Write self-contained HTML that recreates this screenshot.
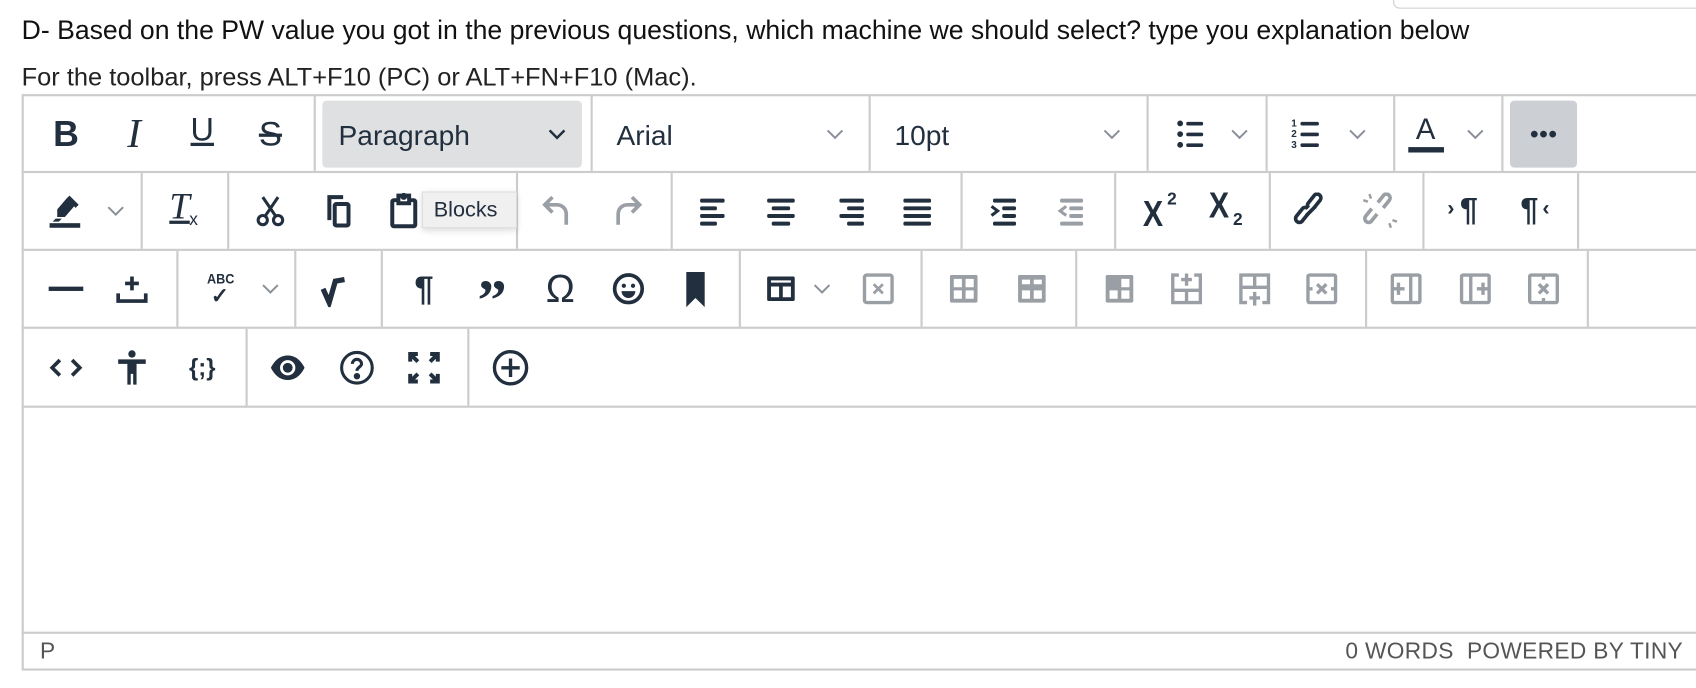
<!DOCTYPE html>
<html><head><meta charset="utf-8"><style>
html,body{margin:0;padding:0;background:#fff;overflow:hidden}
#w{position:absolute;left:0;top:0;width:1568px;height:636px;transform:scale(1.08163);transform-origin:0 0;font-family:"Liberation Sans",sans-serif;color:#222f3e}
.t{position:absolute;white-space:nowrap;color:#111}
.ln{position:absolute;background:#ccc}
.i{position:absolute;width:34px;height:34px;margin:-17px 0 0 -17px}
.i svg{width:34px;height:34px;display:block}
.ch{position:absolute;width:16px;height:16px;margin:-8px 0 0 -8px}
.tx{position:absolute;font-size:25px;color:#222f3e;transform:translate(-50%,-50%)}
</style></head><body><div id="w">
<div style="position:absolute;left:1288px;top:-10px;width:300px;height:18px;border:1.5px solid #ccc;border-radius:6px;box-sizing:border-box"></div>
<div class="t" style="left:20px;top:15px;font-size:24.6px">D- Based on the PW value you got in the previous questions, which machine we should select? type you explanation below</div>
<div class="t" style="left:20px;top:58px;font-size:23.5px;color:#222">For the toolbar, press ALT+F10 (PC) or ALT+FN+F10 (Mac).</div>

<div style="position:absolute;left:20px;top:87px;width:1560px;height:533px;border:2px solid #ccc;box-sizing:border-box"></div>
<div class="ln" style="left:20px;top:158px;width:1560px;height:2px"></div>
<div class="ln" style="left:20px;top:230px;width:1560px;height:2px"></div>
<div class="ln" style="left:20px;top:302px;width:1560px;height:2px"></div>
<div class="ln" style="left:20px;top:375px;width:1560px;height:2px"></div>
<div class="ln" style="left:20px;top:584px;width:1560px;height:2px"></div>
<div class="ln" style="left:290px;top:88px;width:1.5px;height:70px"></div>
<div class="ln" style="left:546px;top:88px;width:1.5px;height:70px"></div>
<div class="ln" style="left:803px;top:88px;width:1.5px;height:70px"></div>
<div class="ln" style="left:1060px;top:88px;width:1.5px;height:70px"></div>
<div class="ln" style="left:1170px;top:88px;width:1.5px;height:70px"></div>
<div class="ln" style="left:1288px;top:88px;width:1.5px;height:70px"></div>
<div class="ln" style="left:1388px;top:88px;width:1.5px;height:70px"></div>
<div class="ln" style="left:130px;top:160px;width:1.5px;height:70px"></div>
<div class="ln" style="left:210px;top:160px;width:1.5px;height:70px"></div>
<div class="ln" style="left:477px;top:160px;width:1.5px;height:70px"></div>
<div class="ln" style="left:620px;top:160px;width:1.5px;height:70px"></div>
<div class="ln" style="left:888px;top:160px;width:1.5px;height:70px"></div>
<div class="ln" style="left:1030px;top:160px;width:1.5px;height:70px"></div>
<div class="ln" style="left:1173px;top:160px;width:1.5px;height:70px"></div>
<div class="ln" style="left:1315px;top:160px;width:1.5px;height:70px"></div>
<div class="ln" style="left:1458px;top:160px;width:1.5px;height:70px"></div>
<div class="ln" style="left:163px;top:232px;width:1.5px;height:70px"></div>
<div class="ln" style="left:272px;top:232px;width:1.5px;height:70px"></div>
<div class="ln" style="left:352px;top:232px;width:1.5px;height:70px"></div>
<div class="ln" style="left:683px;top:232px;width:1.5px;height:70px"></div>
<div class="ln" style="left:851px;top:232px;width:1.5px;height:70px"></div>
<div class="ln" style="left:994px;top:232px;width:1.5px;height:70px"></div>
<div class="ln" style="left:1262px;top:232px;width:1.5px;height:70px"></div>
<div class="ln" style="left:1467px;top:232px;width:1.5px;height:70px"></div>
<div class="ln" style="left:227px;top:304px;width:1.5px;height:71px"></div>
<div class="ln" style="left:432px;top:304px;width:1.5px;height:71px"></div>

<!-- row1 -->
<div class="tx" style="left:61px;top:124px;font-weight:bold;font-size:33px">B</div>
<div class="tx" style="left:124px;top:124px;font-style:italic;font-family:'Liberation Serif';font-size:38px">I</div>
<div class="tx" style="left:187px;top:121px;text-decoration:underline;font-size:30px">U</div>
<div class="tx" style="left:250px;top:124px;text-decoration:line-through;font-size:32px">S</div>
<div style="position:absolute;left:298px;top:93px;width:240px;height:62px;background:#dee0e2;border-radius:4px"></div>
<div class="t" style="left:313px;top:110px;font-size:26px;color:#222f3e">Paragraph</div>
<div class="t" style="left:570px;top:110px;font-size:26px;color:#222f3e">Arial</div>
<div class="t" style="left:827px;top:110px;font-size:26px;color:#222f3e">10pt</div>
<svg class="ch" style="left:515px;top:124px" viewBox="0 0 14 14"><path d="M1 4l6 6 6-6" fill="none" stroke="#222f3e" stroke-width="2"/></svg>
<svg class="ch" style="left:772px;top:124px" viewBox="0 0 14 14"><path d="M1 4l6 6 6-6" fill="none" stroke="#8a9099" stroke-width="1.6"/></svg>
<svg class="ch" style="left:1028px;top:124px" viewBox="0 0 14 14"><path d="M1 4l6 6 6-6" fill="none" stroke="#8a9099" stroke-width="1.6"/></svg>
<svg class="ch" style="left:1146px;top:124px" viewBox="0 0 14 14"><path d="M1 4l6 6 6-6" fill="none" stroke="#8a9099" stroke-width="1.6"/></svg>
<svg class="ch" style="left:1255px;top:124px" viewBox="0 0 14 14"><path d="M1 4l6 6 6-6" fill="none" stroke="#8a9099" stroke-width="1.6"/></svg>
<svg class="ch" style="left:1364px;top:124px" viewBox="0 0 14 14"><path d="M1 4l6 6 6-6" fill="none" stroke="#8a9099" stroke-width="1.6"/></svg>
<div class="i" style="left:1101px;top:124px"><svg viewBox="0 0 24 24" fill="#222f3e"><circle cx="5" cy="5" r="1.9"/><circle cx="5" cy="12" r="1.9"/><circle cx="5" cy="19" r="1.9"/><rect x="9" y="4" width="11" height="2.4" rx="1"/><rect x="9" y="11" width="11" height="2.4" rx="1"/><rect x="9" y="18" width="11" height="2.4" rx="1"/></svg></div>
<div class="i" style="left:1208px;top:124px"><svg viewBox="0 0 24 24" fill="#222f3e"><text x="2" y="7" font-size="6.5" font-weight="bold" font-family="Liberation Sans">1</text><text x="2" y="14" font-size="6.5" font-weight="bold" font-family="Liberation Sans">2</text><text x="2" y="21" font-size="6.5" font-weight="bold" font-family="Liberation Sans">3</text><rect x="8" y="4" width="12" height="2.4" rx="1"/><rect x="8" y="11" width="12" height="2.4" rx="1"/><rect x="8" y="18" width="12" height="2.4" rx="1"/></svg></div>
<div class="tx" style="left:1318px;top:120px;font-size:27px">A</div>
<div style="position:absolute;left:1302px;top:136px;width:33px;height:5px;background:#222f3e"></div>
<div style="position:absolute;left:1396px;top:93px;width:62px;height:62px;background:#cccfd3;border-radius:4px"></div>
<div class="i" style="left:1427px;top:124px"><svg viewBox="0 0 24 24" fill="#222f3e"><circle cx="6" cy="12" r="2.2"/><circle cx="12" cy="12" r="2.2"/><circle cx="18" cy="12" r="2.2"/></svg></div>

<!-- row2 -->
<div class="i" style="left:60px;top:195px"><svg viewBox="0 0 24 24" fill="#222f3e"><path d="M13 4l5 5-6 7-5 0 0-5z M15 2l6 6-2 2-6-6z M6 17h4l-2 2H4z"/><rect x="2" y="20" width="20" height="3"/></svg></div>
<svg class="ch" style="left:107px;top:195px" viewBox="0 0 14 14"><path d="M1 4l6 6 6-6" fill="none" stroke="#8a9099" stroke-width="1.6"/></svg>
<div class="tx" style="left:166px;top:192px;font-style:italic;font-family:'Liberation Serif';font-size:34px;text-decoration:underline">T</div>
<div class="t" style="left:175px;top:195px;font-size:16px;color:#222f3e">x</div>
<div class="i" style="left:250px;top:195px"><svg viewBox="0 0 24 24" fill="none" stroke="#222f3e" stroke-width="2"><circle cx="7" cy="18" r="3"/><circle cx="17" cy="18" r="3"/><path d="M8.5 15.5L17 3M15.5 15.5L7 3"/></svg></div>
<div class="i" style="left:313px;top:195px"><svg viewBox="0 0 24 24" fill="none" stroke="#222f3e" stroke-width="2.6"><path d="M6 18V3h9"/><rect x="9.5" y="7.5" width="9" height="14" rx="1"/></svg></div>
<div class="i" style="left:374px;top:195px"><svg viewBox="0 0 24 24" fill="none" stroke="#222f3e" stroke-width="2.6"><rect x="4" y="5" width="15" height="17" rx="1"/><rect x="8" y="2" width="7" height="5" fill="#fff"/><circle cx="11.5" cy="2.5" r="1"/></svg></div>
<div style="position:absolute;left:390px;top:177px;width:88px;height:34px;background:#f0f0f0;border:1px solid #ddd;box-shadow:0 2px 6px rgba(0,0,0,.15);box-sizing:border-box"></div>
<div class="t" style="left:401px;top:183px;font-size:20px;color:#222f3e">Blocks</div>
<div class="i" style="left:515px;top:195px"><svg viewBox="0 0 24 24" fill="none" stroke="#9a9fa5" stroke-width="2.4"><path d="M9 3L4 8l5 5"/><path d="M4 8h8a6 6 0 016 6v7"/></svg></div>
<div class="i" style="left:580px;top:195px"><svg viewBox="0 0 24 24" fill="none" stroke="#9a9fa5" stroke-width="2.4"><path d="M15 3l5 5-5 5"/><path d="M20 8h-8a6 6 0 00-6 6v7"/></svg></div>
<div class="i" style="left:660px;top:195px"><svg viewBox="0 0 24 24" fill="#222f3e"><rect x="3" y="4" width="16" height="2.6" rx="1"/><rect x="3" y="9" width="11" height="2.6" rx="1"/><rect x="3" y="14" width="16" height="2.6" rx="1"/><rect x="3" y="19" width="11" height="2.6" rx="1"/></svg></div>
<div class="i" style="left:722px;top:195px"><svg viewBox="0 0 24 24" fill="#222f3e"><rect x="3" y="4" width="18" height="2.6" rx="1"/><rect x="6" y="9" width="12" height="2.6" rx="1"/><rect x="3" y="14" width="18" height="2.6" rx="1"/><rect x="6" y="19" width="12" height="2.6" rx="1"/></svg></div>
<div class="i" style="left:786px;top:195px"><svg viewBox="0 0 24 24" fill="#222f3e"><rect x="5" y="4" width="16" height="2.6" rx="1"/><rect x="10" y="9" width="11" height="2.6" rx="1"/><rect x="5" y="14" width="16" height="2.6" rx="1"/><rect x="10" y="19" width="11" height="2.6" rx="1"/></svg></div>
<div class="i" style="left:848px;top:195px"><svg viewBox="0 0 24 24" fill="#222f3e"><rect x="3" y="4" width="18" height="2.6" rx="1"/><rect x="3" y="9" width="18" height="2.6" rx="1"/><rect x="3" y="14" width="18" height="2.6" rx="1"/><rect x="3" y="19" width="18" height="2.6" rx="1"/></svg></div>
<div class="i" style="left:928px;top:195px"><svg viewBox="0 0 24 24" fill="#222f3e"><rect x="5" y="4" width="15" height="2.6" rx="1"/><rect x="11" y="9" width="9" height="2.6" rx="1"/><rect x="11" y="14" width="9" height="2.6" rx="1"/><rect x="5" y="19" width="15" height="2.6" rx="1"/><path d="M4 9l4 3-4 3" fill="none" stroke="#222f3e" stroke-width="2"/></svg></div>
<div class="i" style="left:990px;top:195px"><svg viewBox="0 0 24 24" fill="#9a9fa5"><rect x="5" y="4" width="15" height="2.6" rx="1"/><rect x="11" y="9" width="9" height="2.6" rx="1"/><rect x="11" y="14" width="9" height="2.6" rx="1"/><rect x="5" y="19" width="15" height="2.6" rx="1"/><path d="M9 9l-4 3 4 3" fill="none" stroke="#9a9fa5" stroke-width="2"/></svg></div>
<div class="tx" style="left:1066px;top:198px;font-size:33px;font-weight:bold;transform:translate(-50%,-50%) scaleX(.85)">X</div><div class="t" style="left:1079px;top:176px;font-size:16px;font-weight:bold;color:#222f3e">2</div>
<div class="tx" style="left:1127px;top:190px;font-size:33px;font-weight:bold;transform:translate(-50%,-50%) scaleX(.85)">X</div><div class="t" style="left:1140px;top:195px;font-size:16px;font-weight:bold;color:#222f3e">2</div>
<div class="i" style="left:1212px;top:195px"><svg viewBox="0 0 24 24" fill="none" stroke="#222f3e" stroke-width="2.4"><path d="M10 14l-4 5a2.5 2.5 0 01-3.5-3.5l4-5a2.5 2.5 0 013.5 0"/><path d="M14 10l4-5a2.5 2.5 0 00-3.5-3.5l-4 5a2.5 2.5 0 000 3.5"/><path d="M9 15l6-6"/></svg></div>
<div class="i" style="left:1276px;top:195px"><svg viewBox="0 0 24 24" fill="none" stroke="#9a9fa5" stroke-width="2.4"><path d="M10 14l-4 5a2.5 2.5 0 01-3.5-3.5l4-5"/><path d="M14 10l4-5a2.5 2.5 0 00-3.5-3.5l-4 5"/><path d="M5 1l1 3M1 5l3 1M19 23l-1-3M23 19l-3-1" stroke-width="1.6"/></svg></div>
<div class="tx" style="left:1358px;top:195px;font-size:30px;font-weight:bold">¶</div><div class="t" style="left:1338px;top:182px;font-size:20px;font-weight:bold;color:#222f3e">›</div>
<div class="tx" style="left:1414px;top:195px;font-size:30px;font-weight:bold">¶</div><div class="t" style="left:1426px;top:182px;font-size:20px;font-weight:bold;color:#222f3e">‹</div>

<!-- row3 -->
<div style="position:absolute;left:45px;top:265px;width:32px;height:4px;background:#222f3e"></div>
<div class="i" style="left:122px;top:267px"><svg viewBox="0 0 24 24" fill="none" stroke="#222f3e" stroke-width="2.4"><path d="M12 4v9M7.5 8.5h9"/><path d="M3 15v5h18v-5"/></svg></div>
<div class="t" style="left:190px;top:250px;font-size:13px;font-weight:bold;color:#222f3e;transform:scaleX(.9)">ABC</div>
<div class="t" style="left:195px;top:261px;font-size:20px;font-weight:bold;color:#222f3e">✓</div>
<svg class="ch" style="left:250px;top:267px" viewBox="0 0 14 14"><path d="M1 4l6 6 6-6" fill="none" stroke="#8a9099" stroke-width="1.6"/></svg>
<div class="i" style="left:310px;top:267px"><svg viewBox="0 0 24 24" fill="none" stroke="#222f3e" stroke-width="3.4"><path d="M4 12l4 9 4-14 6-1"/></svg></div>
<div class="tx" style="left:392px;top:267px;font-size:32px;font-weight:bold">¶</div>
<div class="tx" style="left:455px;top:278px;font-size:54px;font-weight:bold;font-family:'Liberation Serif'">”</div>
<div class="tx" style="left:518px;top:267px;font-size:36px">Ω</div>
<div class="i" style="left:581px;top:267px"><svg viewBox="0 0 24 24" fill="none" stroke="#222f3e" stroke-width="2.4"><circle cx="12" cy="12" r="9"/><circle cx="9" cy="10" r="1.4" fill="#222f3e" stroke="none"/><circle cx="15" cy="10" r="1.4" fill="#222f3e" stroke="none"/><path d="M7.5 13.5h9a4.5 4.5 0 01-9 0z" fill="#222f3e" stroke="none"/></svg></div>
<div class="i" style="left:643px;top:267px"><svg viewBox="0 0 24 24" fill="#222f3e"><path d="M6 1h12v23l-6-6-6 6z"/></svg></div>
<div class="i" style="left:722px;top:267px"><svg viewBox="0 0 24 24" fill="#222f3e"><path d="M4 4h16a1 1 0 011 1v14a1 1 0 01-1 1H4a1 1 0 01-1-1V5a1 1 0 011-1z M5.5 10.5v7h5.3v-7z M13.2 10.5v7h5.3v-7z M5.5 6.5v1.5h13V6.5z" fill-rule="evenodd"/></svg></div>
<svg class="ch" style="left:760px;top:267px" viewBox="0 0 14 14"><path d="M1 4l6 6 6-6" fill="none" stroke="#8a9099" stroke-width="1.6"/></svg>
<div class="i" style="left:812px;top:267px"><svg viewBox="0 0 24 24" fill="none" stroke="#9a9fa5" stroke-width="2.2"><rect x="3" y="3" width="18" height="18" rx="1.5"/><path d="M9 9l6 6M15 9l-6 6" stroke-width="1.8"/></svg></div>
<div class="i" style="left:891px;top:267px"><svg viewBox="0 0 24 24" fill="#9a9fa5"><path d="M4 3h16a1 1 0 011 1v16a1 1 0 01-1 1H4a1 1 0 01-1-1V4a1 1 0 011-1z M5.5 5.5v5.5h5.3V5.5z M13.2 5.5v5.5h5.3V5.5z M5.5 13v5.5h5.3V13z M13.2 13v5.5h5.3V13z" fill-rule="evenodd"/></svg></div>
<div class="i" style="left:954px;top:267px"><svg viewBox="0 0 24 24" fill="#9a9fa5"><path d="M4 3h16a1 1 0 011 1v16a1 1 0 01-1 1H4a1 1 0 01-1-1V4a1 1 0 011-1z M5.5 13v5.5h5.3V13z M13.2 13v5.5h5.3V13z M5.5 6h5.3v3H5.5z M13.2 6h5.3v3h-5.3z" fill-rule="evenodd"/></svg></div>
<div class="i" style="left:1035px;top:267px"><svg viewBox="0 0 24 24" fill="#9a9fa5"><path d="M4 3h16a1 1 0 011 1v16a1 1 0 01-1 1H4a1 1 0 01-1-1V4a1 1 0 011-1z M13.2 5.5v5.5h5.3V5.5z M5.5 13v5.5h5.3V13z M13.2 13v5.5h5.3V13z" fill-rule="evenodd"/></svg></div>
<div class="i" style="left:1097px;top:267px"><svg viewBox="0 0 24 24" fill="none" stroke="#9a9fa5" stroke-width="2.2"><path d="M7 3H3v18h18V3h-4"/><path d="M3 13h18M12 13v8M12 2v8M8.5 6h7"/></svg></div>
<div class="i" style="left:1160px;top:267px"><svg viewBox="0 0 24 24" fill="none" stroke="#9a9fa5" stroke-width="2.2"><path d="M7 21H3V3h18v18h-4"/><path d="M3 11h18M12 3v8M12 14v9M8.5 18h7"/></svg></div>
<div class="i" style="left:1222px;top:267px"><svg viewBox="0 0 24 24" fill="none" stroke="#9a9fa5" stroke-width="2.2"><rect x="3" y="3" width="18" height="18" rx="1"/><path d="M3 12h3M18 12h3M9 9l6 6M15 9l-6 6"/></svg></div>
<div class="i" style="left:1300px;top:267px"><svg viewBox="0 0 24 24" fill="none" stroke="#9a9fa5" stroke-width="2.2"><rect x="3" y="3" width="18" height="18" rx="1"/><path d="M15 3v18M3 12h8M7 8v8"/></svg></div>
<div class="i" style="left:1364px;top:267px"><svg viewBox="0 0 24 24" fill="none" stroke="#9a9fa5" stroke-width="2.2"><rect x="3" y="3" width="18" height="18" rx="1"/><path d="M9 3v18M13 12h8M17 8v8"/></svg></div>
<div class="i" style="left:1427px;top:267px"><svg viewBox="0 0 24 24" fill="none" stroke="#9a9fa5" stroke-width="2.2"><rect x="3" y="3" width="18" height="18" rx="1"/><path d="M12 3v3M12 18v3M9 9l6 6M15 9l-6 6"/></svg></div>

<!-- row4 -->
<div class="i" style="left:61px;top:340px"><svg viewBox="0 0 24 24" fill="none" stroke="#222f3e" stroke-width="2.4"><path d="M8 7l-5 5 5 5M16 7l5 5-5 5"/></svg></div>
<div class="i" style="left:122px;top:340px"><svg viewBox="0 0 24 24" fill="#222f3e"><circle cx="12" cy="3" r="2.4"/><path d="M3 6.5h18v3h-6V23h-2.2v-7h-1.6v7H9V9.5H3z"/></svg></div>
<div class="tx" style="left:187px;top:340px;font-size:22px;font-weight:bold">{;}</div>
<div class="i" style="left:266px;top:340px"><svg viewBox="0 0 24 24"><path d="M1 12C4 6 8 4 12 4s8 2 11 8c-3 6-7 8-11 8S4 18 1 12z" fill="#222f3e"/><circle cx="12" cy="12" r="5" fill="#fff"/><circle cx="12" cy="12" r="3.2" fill="#222f3e"/></svg></div>
<div class="i" style="left:330px;top:340px"><svg viewBox="0 0 24 24" fill="none" stroke="#222f3e" stroke-width="2"><circle cx="12" cy="12" r="10"/><path d="M9 9.5a3 3 0 116 0c0 2-3 2.2-3 4.5"/><circle cx="12" cy="17.5" r="1.1" fill="#222f3e"/></svg></div>
<div class="i" style="left:392px;top:340px"><svg viewBox="0 0 24 24" fill="none" stroke="#222f3e" stroke-width="2.6"><path d="M3 8V3h5M3 3l5 5M21 8V3h-5M21 3l-5 5M3 16v5h5M3 21l5-5M21 16v5h-5M21 21l-5-5"/></svg></div>
<div class="i" style="left:472px;top:340px"><svg viewBox="0 0 24 24" fill="none" stroke="#222f3e" stroke-width="2.2"><circle cx="12" cy="12" r="10.5"/><path d="M12 6v12M6 12h12"/></svg></div>

<div class="t" style="left:37px;top:591px;font-size:21px;color:#555">P</div>
<div class="t" style="right:12px;top:591px;font-size:21px;color:#555;letter-spacing:.3px">0 WORDS&nbsp; POWERED BY TINY</div>
</div></body></html>
